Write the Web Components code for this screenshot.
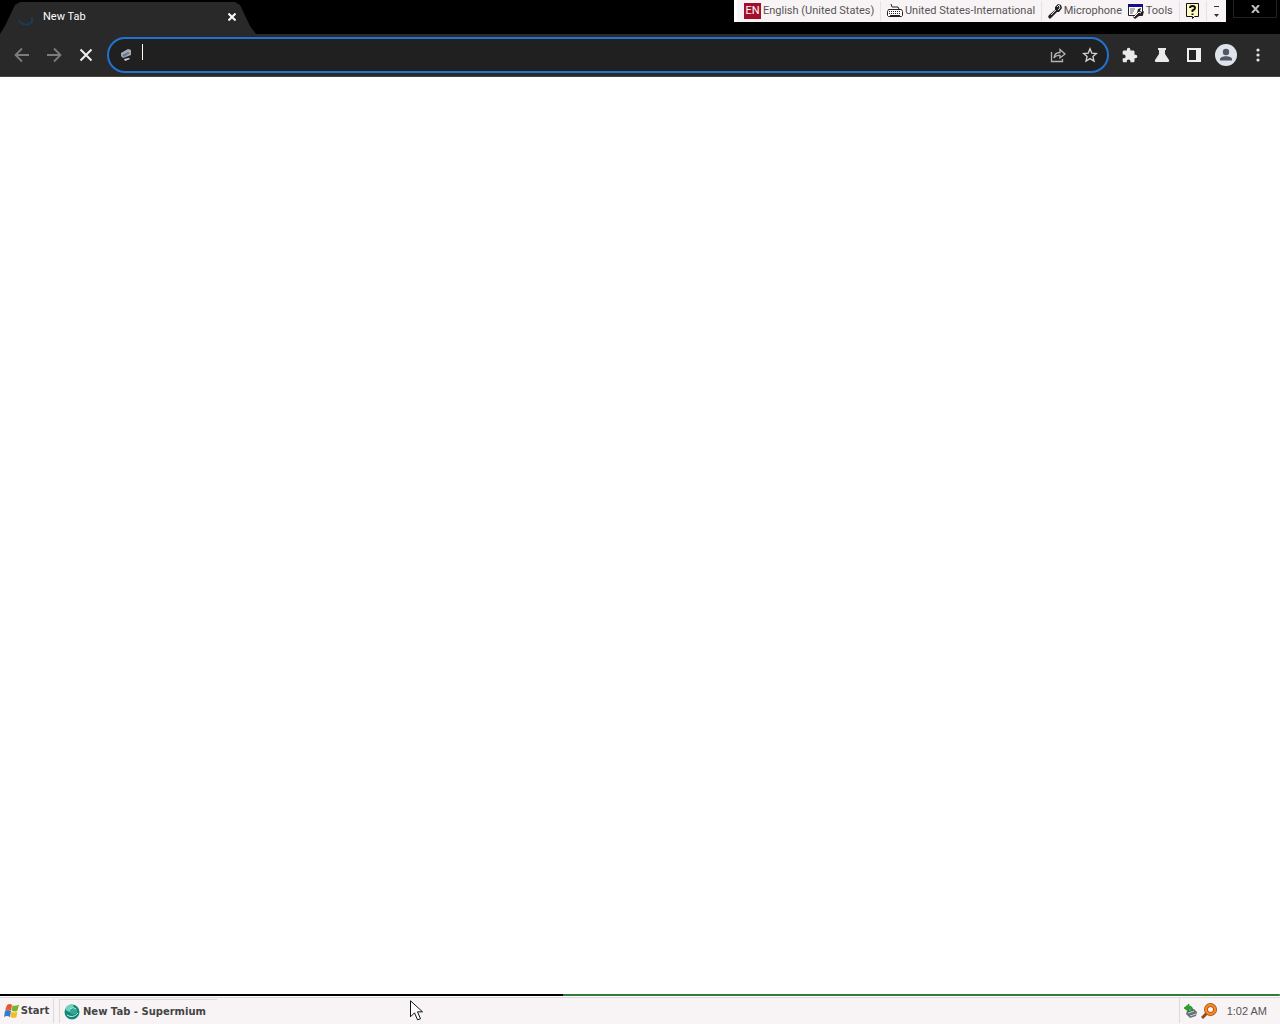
<!DOCTYPE html>
<html lang="en">
<head>
<meta charset="utf-8">
<title>New Tab - Supermium</title>
<style>
html, body { height: 100%; }
body { margin: 0; overflow: hidden; background: #fff; font: 11px/14px "Liberation Sans", Arial, sans-serif; }
</style>
</head>
<body>
<desktop-screen></desktop-screen>
<script>
const RESET = `
*, *::before, *::after { box-sizing: border-box; }
button { border: 0; padding: 0; margin: 0; background: none; color: inherit; font: inherit; display: flex; align-items: center; justify-content: center; }
svg { display: block; flex: none; }
`;
function define(name, css, html) {
  const template = document.createElement('template');
  template.innerHTML = `<style>${RESET}${css}</style>${html}`;
  customElements.define(name, class extends HTMLElement {
    constructor() {
      super();
      this.attachShadow({ mode: 'open' }).append(template.content.cloneNode(true));
    }
  });
}

define('browser-tab', `
:host { display: flex; width: 256px; height: 32px; padding: 0 18px 2px; align-items: center; gap: 9px; color: #fff;
  background: #292929; clip-path: polygon(0 100%, 5px 24px, 15px 3px, 20px 0, 235px 0, 240px 3px, 250px 24px, 256px 100%); }
.title { flex: 1; }
.close { width: 12px; height: 16px; }
`, `
<svg width="16" height="18" viewBox="0 0 16 18" fill="none" stroke="#183c59" stroke-width="2"><path d="M1 12c2 5 9 6 13 2V9"/></svg>
<span class="title"><slot></slot></span>
<button class="close" aria-label="Close tab"><svg width="8" height="8" viewBox="0 0 8 8" stroke="#fff" stroke-width="2"><path d="M.5.5l7 7M7.5.5l-7 7"/></svg></button>
`);

define('language-item', `
:host { display: flex; align-items: center; }
button { gap: 2px; height: 22px; white-space: nowrap; }
`, `<button><slot name="icon"></slot><slot></slot></button>`);

define('language-bar', `
:host { display: flex; align-items: center; height: 22px; width: 492px; padding: 0 5px 0 7px; justify-content: space-between; background: #f8f4f5; color: #555; border-left: 3px solid #fff; }
.en { width: 17px; height: 16px; line-height: 16px; background: #a50e2a; color: #fff; text-align: center; }
i { width: 1px; height: 20px; background: #e6e1e2; }
.options { width: 8px; height: 20px; }
`, `
<language-item><span slot="icon" class="en">EN</span>English (United States)</language-item><i></i>
<language-item><svg slot="icon" width="16" height="14" viewBox="0 0 16 14" fill="none" stroke="#222"><path d="M4 0l1 3h6l1 2"/><path d="M1.5 5.500h13l1 2v4l-1 1h-13l-1-1v-4z" fill="#fff"/><path d="M2 7.500h12M2 9.500h12" stroke-dasharray="1 1"/><path d="M3 11.500h10"/></svg>United States-International</language-item><i></i>
<language-item><svg slot="icon" width="14" height="16" viewBox="0 0 14 16"><path d="M7 4L10 1l3 1 1 3-3 4-2 0-5 5-2 2-2-2 1-2 6-5z" fill="#222"/><path d="M9 4l2-2 1 3-2 2M3 12l5-5" fill="none" stroke="#ddd"/></svg>Microphone</language-item>
<language-item><svg slot="icon" width="16" height="15" viewBox="0 0 16 15"><path d="M.5.500h14v11H.5z" fill="#fff" stroke="#222"/><path d="M0 0h15v3H0z" fill="#10108a"/><path d="M2 5h5M2 7h4M2 9h3" stroke="#666"/><path d="M10 5l3-1-1 3 2 1 2-1-1 4-4 1-4 3-2-2 4-4z" fill="#222"/><path d="M6 13l5-5 2 1" stroke="#fff" fill="none"/></svg>Tools</language-item><i></i>
<button aria-label="Help"><svg width="15" height="16" viewBox="0 0 15 16"><path d="M1.500.5h12v13h-4l-2 2v-2h-6z" fill="#fffbc0" stroke="#111"/><path d="M5 5q0-2 2.500-2T10 5q0 1.500-2.500 2.500v1.500M7.500 10.500v1.500" fill="none" stroke="#111" stroke-width="2"/></svg></button><i></i>
<button class="options" aria-label="Language bar options"><svg width="5" height="12" viewBox="0 0 5 12" fill="#333"><path d="M0 1h5v1H0zM0 9h5L2.500 12z"/></svg></button>
`);

define('tab-strip', `
:host { display: flex; height: 34px; background: #000; align-items: flex-start; font-family: Roboto, sans-serif; }
browser-tab { margin-top: 2px; }
.drag { flex: 1; }
.window-close { width: 44px; margin: 0 3px 0 7px; height: 18px; color: #bbb; border: solid #222; border-width: 0 1px 1px; }
`, `
<browser-tab>New Tab</browser-tab>
<div class="drag"></div>
<language-bar></language-bar>
<button class="window-close" aria-label="Close window"><svg width="9" height="8" viewBox="0 0 9 8" fill="none" stroke="currentColor" stroke-width="2"><path d="M1 0l7 8M8 0L1 8"/></svg></button>
`);

define('address-bar', `
:host { display: flex; flex: 1; height: 36px; border: 2px solid #2272d2; border-radius: 18px; background: #202020; align-items: center; padding: 0 1px 0 11px; }
.caret { width: 1px; height: 16px; background: #fff; margin: -6px 0 0 10px; }
input { flex: 1; min-width: 0; height: 24px; border: 0; outline: 0; padding: 0; background: none; color: #fff; font: inherit; }
button { width: 32px; height: 32px; }
`, `
<svg width="12" height="14" viewBox="0 0 12 14"><path d="M1 5l7-4 3 1v5l-8 3-2-2z" fill="#a6adb0"/><path d="M2 7l6-3 2 1-6 4z" fill="#61799e"/><path d="M4 11l5-1 1 1-5 2z" fill="#d0d0d0"/></svg>
<span class="caret"></span>
<input type="text" aria-label="Address and search bar">
<button aria-label="Share"><svg width="16" height="16" viewBox="0 0 16 16" fill="none" stroke="#b4b4b4" stroke-width="1.300"><path d="M1.500 5v9.500h11V12"/><path d="M4 11q.5-5.500 6-5.500V2.500L15 7l-5 4V8.500Q6 8 4 11z"/></svg></button>
<button aria-label="Bookmark this tab"><svg width="16" height="16" viewBox="0 0 16 16" fill="none" stroke="#d4d4d4" stroke-width="1.300"><path d="M8 1.800l1.800 4.300 4.700.4-3.600 3 1.100 4.600L8 11.600l-4 2.500 1.100-4.600-3.600-3 4.700-.4z"/></svg></button>
`);

define('browser-toolbar', `
:host { display: flex; height: 43px; align-items: center; padding: 0 6px; background: #292929; border-bottom: 1px solid #454545; }
button { width: 32px; height: 32px; }
address-bar { margin: 0 5px; }
`, `
<button aria-label="Back"><svg width="16" height="16" viewBox="0 0 16 16" fill="none" stroke="#7c7c7c" stroke-width="1.800"><path d="M15 8H2M8 1.500L1.500 8 8 14.500"/></svg></button>
<button aria-label="Forward"><svg width="16" height="16" viewBox="0 0 16 16" fill="none" stroke="#7c7c7c" stroke-width="1.800"><path d="M1 8h13M8 1.500L14.500 8 8 14.500"/></svg></button>
<button aria-label="Stop loading"><svg width="14" height="14" viewBox="0 0 14 14" stroke="#eee" stroke-width="2"><path d="M1.500 1.500l11 11M12.500 1.500l-11 11"/></svg></button>
<address-bar></address-bar>
<button aria-label="Extensions"><svg width="16" height="16" viewBox="1 0 23 23" fill="#eaeaea"><path d="M20.500 11H19V7c0-1.100-.9-2-2-2h-4V3.500a2.500 2.500 0 0 0-5 0V5H4c-1.100 0-2 .9-2 2v3.800h1.500a2.700 2.700 0 0 1 0 5.400H2V20c0 1.100.9 2 2 2h3.800v-1.500a2.700 2.700 0 0 1 5.400 0V22H17c1.100 0 2-.9 2-2v-4h1.500a2.500 2.500 0 0 0 0-5z"/></svg></button>
<button aria-label="Experiments"><svg width="16" height="16" viewBox="0 0 16 16" fill="#eaeaea"><path d="M4 1h8v2h-1v4l4 6q.8 2-1 2H2q-1.800 0-1-2l4-6V3H4z"/></svg></button>
<button aria-label="Side panel"><svg width="14" height="14" viewBox="0 0 14 14"><path d="M0 0h14v14H0z" fill="#eee"/><path d="M2 2h7v10H2z" fill="#222"/></svg></button>
<button aria-label="Profile"><svg width="22" height="22" viewBox="0 0 22 22"><circle cx="11" cy="11" r="11" fill="#dfe3ea"/><circle cx="11" cy="8" r="3.200" fill="#505866"/><path d="M5 16.500v-1.200c0-4 12-4 12 0v1.200z" fill="#505866"/></svg></button>
<button aria-label="Menu"><svg width="4" height="14" viewBox="0 0 4 14" fill="#e4e4e4"><circle cx="2" cy="2" r="1.600"/><circle cx="2" cy="7" r="1.600"/><circle cx="2" cy="12" r="1.600"/></svg></button>
`);

define('task-bar', `
:host { display: flex; height: 30px; position: relative; color: #444; background: linear-gradient(#000, #000) 0 0 / 44% 2px no-repeat, linear-gradient(#357a3a, #357a3a) 100% 0 / 56% 2px no-repeat, #f8f4f5; padding-top: 2px; }
:host::before { content: ""; position: absolute; left: 0; right: 0; top: 2px; height: 2px; background: #fff; border-bottom: 1px solid #ddd8d9; }
.start, .task { font: bold 10px/14px "DejaVu Sans", Tahoma, sans-serif; margin: 3px 0 1px; }
.start { width: 54px; gap: 1px; border-right: 1px solid #dedadb; }
.task { width: 158px; margin-left: 5px; padding-left: 4px; gap: 3px; justify-content: flex-start; border: solid #dedadb; border-width: 1px 0 0 1px; }
.space { flex: 1; }
.tray { display: flex; align-items: center; gap: 3px; padding: 0 13px 0 3px; margin: 2px 0 1px; border-left: 1px solid #dedadb; }
time { margin-left: 7px; color: #555; }
.pointer { position: absolute; left: 410px; top: 6px; }
`, `
<button class="start"><svg width="16" height="16" viewBox="0 0 16 16"><path d="M3 2q3-2 5 0L7 7.500Q4 6 1 7.500z" fill="#e65a2a"/><path d="M8.500 2.500q3 1 6.500-1l-1.500 6q-2.500 2-6 0z" fill="#76b52b"/><path d="M1 8q3-2 6 0l-1 6q-3-2-6 0z" fill="#3979cc"/><path d="M7.500 8.500q3 2 6 0l-1 5.500q-3 2-6 0z" fill="#f0bd27"/></svg>Start</button>
<button class="task"><svg width="16" height="16" viewBox="0 0 16 16"><circle cx="8" cy="8" r="7.500" fill="#178579"/><path d="M1 5q4-7 9-3Q6 4 8 8q-4 1-7-3z" fill="#75d1b8"/><circle cx="9.500" cy="7" r="3.500" fill="#30a997"/><path d="M6 5q3-3 6 0M3 11q6 4 11-2" fill="none" stroke="#b4eee0"/></svg>New Tab - Supermium</button>
<div class="space"></div>
<div class="tray">
<svg width="15" height="16" viewBox="0 0 15 16"><path d="M4 8l7-2 3 3-1 4-6 2-4-4z" fill="#687179"/><path d="M5 10l6-2M7 13l6-2" stroke="#ccd0d4"/><path d="M1 5l5-4v2q4 0 4 5Q8 6 6 6v3z" fill="#28a428" stroke="#166d1a" stroke-width=".5"/></svg>
<svg width="16" height="16" viewBox="0 0 16 16" fill="none"><path d="M1 15l5-5" stroke="#984916" stroke-width="3"/><circle cx="9.500" cy="6.500" r="4.500" stroke="#a94c0b" stroke-width="4"/><circle cx="9.500" cy="6.500" r="4.500" stroke="#f18a25" stroke-width="2.500"/></svg>
<time>1:02 AM</time>
</div>
<svg class="pointer" width="14" height="21" viewBox="0 0 14 21"><path d="M.5.8v16l4-4 3 7 3-1-3-7h5z" fill="#fff" stroke="#111"/></svg>
`);

define('desktop-screen', `
:host { display: flex; flex-direction: column; height: 100vh; }
main { flex: 1; background: #fff; }
`, `
<tab-strip></tab-strip>
<browser-toolbar></browser-toolbar>
<main></main>
<task-bar></task-bar>
`);
</script>
</body>
</html>
